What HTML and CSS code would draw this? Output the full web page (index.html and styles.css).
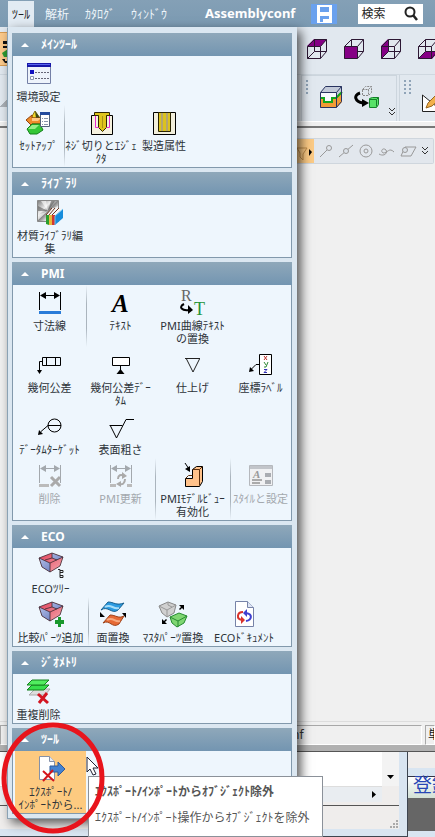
FILE: index.html
```html
<!DOCTYPE html>
<html lang="ja">
<head>
<meta charset="utf-8">
<meta name="viewport" content="width=device-width, initial-scale=1">
<title>Assemblyconf</title>
<link rel="stylesheet" href="styles.css">
</head>
<body>
<svg class="defs" aria-hidden="true">
  <defs>
    <linearGradient id="metal" x1="0" y1="0" x2="1" y2="1"><stop offset="0" stop-color="#777"/><stop offset=".35" stop-color="#eee"/><stop offset=".5" stop-color="#888"/><stop offset=".7" stop-color="#f4f4f4"/><stop offset="1" stop-color="#777"/></linearGradient>
    <linearGradient id="redface" x1="0" y1="0" x2="1" y2="1"><stop offset="0" stop-color="#e0405a"/><stop offset="1" stop-color="#f5a8ae"/></linearGradient>
    <linearGradient id="blueface" x1="0" y1="0" x2="1" y2="1"><stop offset="0" stop-color="#c3cdf0"/><stop offset="1" stop-color="#5469b4"/></linearGradient>
    <g id="bin">
      <path d="M1 6 14 1l11 4-3 9-10 6-8-5z" fill="url(#redface)"/>
      <path d="M1 6 12 11v9l-8-5zM14 1l11 4-6 3-5-2z" fill="url(#blueface)"/>
      <path d="M1 6 14 1l11 4-3 9-10 6-8-5zM1 6l11 5 13-6M12 11v9M14 1v5l-7 2M14 6l5 2" fill="none" stroke="#3c2730" stroke-width=".8"/>
    </g>
    <g id="cube"><path d="M1.500 8.500h13v12h-13zM8.500 1.500h12v12h-12zM1.500 8.500l7-7M14.500 8.500l6-7M14.500 20.500l6-7M1.500 20.500l7-7" fill="none" stroke="#2c1733"/></g>
    <g id="dim"><path d="M2.500 3v18M23.500 3v18M4 6.500h18" fill="none" stroke="currentColor"/><path d="M3 6.500l6-3.500v7zM23 6.500l-6-3.500v7z" fill="currentColor"/></g>
  </defs>
</svg>
<div class="app">
  <header class="menubar">
    <nav class="tabs">
      <button class="tab tab-active">ﾂｰﾙ</button>
      <button class="tab">解析</button>
      <button class="tab">ｶﾀﾛｸﾞ</button>
      <button class="tab">ｳｨﾝﾄﾞｳ</button>
    </nav>
    <h1 class="title">Assemblyconf</h1>
    <button class="save" aria-label="保存"><svg width="26" height="20" viewBox="0 0 26 20"><path d="M6 1h15v18H6z" fill="#fff"/><path d="M9 3h9v5H9zM9 12h9v6H9z" fill="#6aa1ee"/><path d="M12 15h6v3h-6z" fill="#fff"/></svg></button>
    <label class="search"><input type="text" placeholder="検索" aria-label="検索"><svg width="14" height="15" viewBox="0 0 14 15"><circle cx="6" cy="6" r="4.500" fill="none" stroke="#222" stroke-width="2"/><path d="m9 9 4 5" stroke="#222" stroke-width="2.500"/></svg></label>
  </header>

  <div class="toolbar views">
    <button class="sliver" aria-label="選択"><svg width="8" height="34" viewBox="0 0 8 34"><path d="M3 8h5v3H3zM3 13h5v2H3z" fill="#111"/><path d="m2 20 6-4v8H4z" fill="#2d9a32"/><path d="M2 26h3v2h3v2H5z" fill="#111"/></svg></button>
    <div class="tools tools-views">
      <button aria-label="上面"><svg width="22" height="22"><path d="M1 8 8 1h13l-6 7z" fill="#850085"/><use href="#cube"/></svg></button>
      <button aria-label="前面"><svg width="22" height="22"><use href="#cube"/><path d="M2 9h12v11H2z" fill="#850085"/></svg></button>
      <button aria-label="左面"><svg width="22" height="22"><path d="M1 8 8 1v13l-7 7z" fill="#850085"/><use href="#cube"/></svg></button>
      <button aria-label="底面"><svg width="22" height="22"><path d="M1 21 8 14h13l-6 7z" fill="#850085"/><use href="#cube"/></svg></button>
    </div>
  </div>
  <div class="toolbar parts">
    <span class="corner"></span>
    <div class="tools tools-parts">
      <span class="grip"></span>
      <button aria-label="分割"><svg width="24" height="24"><path d="M1 8 7 1h16v16l-6 6H1z" fill="#c3cad9"/><path d="M1 8h16v8H1z" fill="#f7f9fd"/><path d="M1 12h5v5h6v-5h5l6-6v11l-6 6H1z" fill="#f29b35"/><path d="M1 13h4v4h8v-4h4l6-6" fill="none" stroke="#12a51e" stroke-width="2"/><path d="m1.500 7.500 5-6h16v15l-5 6h-16zM1.500 7.500h16l5-6M17.500 7.500v15" fill="none" stroke="#28335f"/></svg></button>
      <button aria-label="部品配置"><svg width="26" height="24"><path d="m8.500 4.500 3-3h6v6l-3 3h-6zM8.500 4.500h6v6M14.500 4.500l3-3" fill="none" stroke="#888" stroke-dasharray="2 1"/><path d="M6 8C-1 10 1 17 9 18" fill="none" stroke="#000" stroke-width="3"/><path d="m8 14 7 4-7 4z"/><path d="m15.500 13.500 3-1h6v7l-2 3h-7z" fill="#58e268" stroke="#14802a"/><path d="M15.500 14.500h7v7M22.500 14.500l2-2" fill="none" stroke="#14802a"/></svg></button>
      <svg class="more" width="7" height="8"><path d="m0 0 3 3 3-3M0 4l3 3 3-3" fill="none" stroke="#333"/></svg>
    </div>
    <div class="tools tools-sketch">
      <span class="grip"></span>
      <button aria-label="スケッチ"><svg width="24" height="24"><path d="M1.500 4v16.500h20z" fill="#fff" stroke="#222"/><path d="m5 17 2-5L18 1l4 4L11 15z" fill="#f1b04b" stroke="#98651f"/></svg></button>
    </div>
  </div>

  <main class="canvas">
    <div class="snapbar">
      <button class="snap-on" aria-label="フィルタ"><svg width="17" height="24"><path d="M0 9h10l-4 6v6l-3-3v-4z" fill="none" stroke="#c18e4b"/><path d="m12 10 3 3-3 4z"/></svg></button>
      <button aria-label="端点"><svg width="14" height="14"><path d="m1 13 7-7" stroke="#999"/><circle cx="10" cy="4" r="2.500" fill="none" stroke="#999"/></svg></button>
      <button aria-label="中点"><svg width="16" height="14"><path d="M1 13 15 1" stroke="#999"/><circle cx="8" cy="7" r="2.500" fill="#dce3ea" stroke="#999"/></svg></button>
      <button aria-label="中心"><svg width="14" height="14"><circle cx="7" cy="7" r="6" fill="none" stroke="#999"/><circle cx="7" cy="7" r="2" fill="none" stroke="#999"/></svg></button>
      <button aria-label="曲線"><svg width="17" height="14"><path d="M1 10c5 3 9-1 7-4-3-3-6 1-3 3 5 0 6-6 11-1" fill="none" stroke="#999"/></svg></button>
      <button aria-label="面"><svg width="17" height="14"><path d="M1 12 5 3h11l-5 9z" fill="none" stroke="#999"/><circle cx="5" cy="6" r="2.500" fill="#dce3ea" stroke="#999"/></svg></button>
      <svg class="more" width="7" height="8"><path d="m0 0 3 3 3-3M0 4l3 3 3-3" fill="none" stroke="#333"/></svg>
    </div>
  </main>
  <footer class="statusbar"><span class="status-file">conf</span><span class="status-unit">単</span></footer>

  <div class="desktop">
    <section class="rear-window">
      <div class="rear-view">
        <div class="rear-page"></div>
        <div class="vscroll"><svg width="7" height="4"><path d="M0 0h7L3.500 4z"/></svg></div>
        <div class="hscroll"><svg width="4" height="7"><path d="M0 0v7l4-3.500z"/></svg></div>
      </div>
      <div class="rear-status"><svg width="9" height="9" fill="#aaa"><path d="M6 0h2v2H6zM3 3h2v2H3zM6 3h2v2H6zM0 6h2v2H0zM3 6h2v2H3zM6 6h2v2H6z"/></svg></div>
    </section>
    <section class="side-window">
      <div class="side-strip"></div>
      <a class="side-link" href="#">登録</a>
      <div class="side-body"></div>
    </section>
  </div>

  <div class="menu">
    <section class="group">
      <h2>ﾒｲﾝﾂｰﾙ</h2>
      <div class="row row-main">
        <button class="item"><svg class="icon" viewBox="0 0 26 26"><path d="M1.500 3.500h23v20h-23z" fill="#eef3fb" stroke="#7480a6"/><path d="M1 3h24v4H1z" fill="#1717a8"/><path d="M2 4h22v1H2z" fill="#5a66ee"/><path d="M4 10h4v4H4z" fill="#1111c0"/><path d="M4.500 16.500h3v3h-3z" fill="#fff" stroke="#8894b0"/><path d="M9 12.500h14M9 18.500h14" stroke="#667" stroke-dasharray="2 1"/></svg><span>環境設定</span></button>
      </div>
      <div class="row row-main">
        <button class="item"><svg class="icon" viewBox="0 0 26 26"><path d="m9 2 5 7H5z" fill="#f3d928" stroke="#857314"/><path d="m9 2 5 7h-4z" fill="#3d4a18"/><path d="m0 11 6-5v3h9v6H6v2z" fill="#ef8c2a" stroke="#91430d"/><path d="M6 9h9l-3 3H6z" fill="#ffc983"/><path d="m1 20 5-5h8l3 6-6 4H4z" fill="#35c736" stroke="#13801b"/><path d="m2 20 4-4h7l-4 4z" fill="#97ef88"/><path d="M14.500 3.500h9v14h-9z" fill="#fff" stroke="#53637c"/><path d="M14 3h10v3H14z" fill="#244b9d"/><path d="M16 9.500h1m1 0h4M16 12.500h1m1 0h4M16 15.500h1m1 0h4" stroke="#8895ac"/></svg><span>ｾｯﾄｱｯﾌﾟ</span></button>
        <button class="item split"><svg class="icon" viewBox="0 0 26 26"><path d="M3.500 6.500h21v19h-21z" fill="#f6f2df" stroke="#000"/><path d="M6.500 3.500h15v3h-3v12l-4 4-4-4v-12h-4z" fill="#dec51d" stroke="#302800"/><path d="M14.500 7v12" stroke="#a8931a"/><path d="M7.500 7v11.500h3M21.500 7v11.500h-3" fill="none" stroke="#e72ad0"/></svg><span>ﾈｼﾞ切りとｴｼﾞｪ<br>ｸﾀ</span></button>
        <button class="item"><svg class="icon" viewBox="0 0 26 26"><path d="M2.500 3.500h22v22h-22z" fill="#f2efdc" stroke="#000"/><path d="M7.500 3.500h12v19h-12z" fill="#dbc21e" stroke="#2b2400"/><path d="M11 4v18M16 4v18" stroke="#b3a570" stroke-width="2"/></svg><span>製造属性</span></button>
      </div>
    </section>

    <section class="group">
      <h2>ﾗｲﾌﾞﾗﾘ</h2>
      <div class="row row-library">
        <button class="item"><svg class="icon" viewBox="0 0 26 26"><path d="M.5 1.500h21v21H.5z" fill="url(#metal)" stroke="#888"/><path d="m11 12-7-10h5zM11 12l10-5v7zM11 12 1 16v5z" fill="#fff" opacity=".6"/><path d="m11 12 3-10h4zM11 12 1 7v5z" fill="#444" opacity=".5"/><path d="m9 16 6-7 11 1-8 16H9z" fill="#f7f7f7"/><path d="M9 16h3v10l-3-1z" fill="#2b9e2e"/><path d="M12 16h3v10h-3z" fill="#e9b83c"/><path d="M15 16h3v10h-3z" fill="#d5382f"/><path d="m18 17 8-7v9l-8 7z" fill="#178ddc"/><path d="m9 16 6-7M12 16l6-7M15 16l7-7" stroke="#6e3622"/><path d="m18 17 8-7M18 17v9" stroke="#75c4f2"/></svg><span>材質ﾗｲﾌﾞﾗﾘ編<br>集</span></button>
      </div>
    </section>

    <section class="group">
      <h2>PMI</h2>
      <div class="row row-pmi">
        <button class="item"><svg class="icon" viewBox="0 0 26 26"><g color="#000"><use href="#dim"/></g><path d="M2 22h22v3H2z" fill="#287bd8"/></svg><span>寸法線</span></button>
        <button class="item split"><svg class="icon" viewBox="0 0 26 26"><text x="4" y="23" class="glyph-a">A</text></svg><span>ﾃｷｽﾄ</span></button>
        <button class="item"><svg class="icon" viewBox="0 0 26 26"><text x="1" y="12" class="glyph-r">R</text><text x="14" y="26" class="glyph-t">T</text><path d="M4 15c-6 3-2 7 5 6" fill="none" stroke="#000" stroke-width="2"/><path d="m8 16 5 5-5 4z"/></svg><span>PMI曲線ﾃｷｽﾄ<br>の置換</span></button>
      </div>
      <div class="row row-pmi">
        <button class="item"><svg class="icon" viewBox="0 0 26 26"><path d="M5.500 6.500h18v8h-18zM9.500 6.500v8M18.500 6.500v8M5 10.500H2.500V21" fill="none" stroke="#000"/><path d="M0 19h5l-2.500 4z"/></svg><span>幾何公差</span></button>
        <button class="item"><svg class="icon" viewBox="0 0 26 26"><path d="M4.500 6.500h17v8h-17zM12.500 15v6" fill="#fff" stroke="#000"/><path d="m12.500 18 4 5h-8z"/></svg><span>幾何公差ﾃﾞｰ<br>ﾀﾑ</span></button>
        <button class="item"><svg class="icon" viewBox="0 0 26 26"><path d="M5 7.500h15M6.500 8l6.500 13 6.500-13" fill="none" stroke="#222"/></svg><span>仕上げ</span></button>
        <button class="item"><svg class="icon" viewBox="0 0 26 26"><path d="M11.500 3.500h12v20h-12z" fill="#fff" stroke="#000"/><path d="m16 5 3 4m0-4-3 4" stroke="#bd302c"/><path d="m16 11 2 3m2-3-2 5h-2" fill="none" stroke="#2f8a36"/><path d="M16 18.500h3l-3 3h3" fill="none" stroke="#3332b5"/><path d="M11 13.500H8l-5 5" fill="none" stroke="#000"/><path d="m1 21 1-5 4 4z"/></svg><span>座標ﾗﾍﾞﾙ</span></button>
      </div>
      <div class="row row-pmi">
        <button class="item"><svg class="icon" viewBox="0 0 26 26"><circle cx="17.500" cy="12.500" r="6.500" fill="none" stroke="#000"/><path d="M11 12.500h13M11 12.500l-7 6" stroke="#000"/><path d="m1 22 1-5 4 4z"/></svg><span>ﾃﾞｰﾀﾑﾀｰｹﾞｯﾄ</span></button>
        <button class="item"><svg class="icon" viewBox="0 0 26 26"><path d="M1.500 12.500h13M2.500 13l6 12L18 6.500h8" fill="none" stroke="#000"/></svg><span>表面粗さ</span></button>
      </div>
      <div class="row row-pmi">
        <button class="item" disabled><svg class="icon" viewBox="0 0 26 26"><use href="#dim"/><path d="M2 22h10v3H2z" fill="#bbb"/><path d="m14 15 9 9m0-9-9 9" stroke="#aaa" stroke-width="3"/></svg><span>削除</span></button>
        <button class="item" disabled><svg class="icon" viewBox="0 0 26 26"><use href="#dim"/><path d="M2 22h6v3H2zM19 22h5v3h-5z" fill="#bbb"/><path d="M10 17c0-4 3-5 6-3M17 17c0 5-3 6-6 5" fill="none" stroke="#aaa" stroke-width="2"/><path d="m14 10 5 4-5 3zM13 19v6l-5-3z" fill="#aaa"/></svg><span>PMI更新</span></button>
        <button class="item split"><svg class="icon" viewBox="0 0 26 26"><path d="M5.500 16.500h7v-9l4-3h6v15l-3 5h-14z" fill="#ffc28b" stroke="#000"/><path d="M12.500 7.500h7v16M19.500 7.500l3-3M5.500 16.500l3-3h4" fill="none" stroke="#5a2d0b"/><path d="m5 1 4 6" stroke="#000"/><path d="m10 10-5-3 5-3z"/></svg><span>PMIﾓﾃﾞﾙﾋﾞｭｰ<br>有効化</span></button>
        <button class="item split" disabled><svg class="icon" viewBox="0 0 26 26"><path d="M1.500 3.500h23v20h-23z" fill="#f0f1f3" stroke="#b5b8bd"/><path d="M2 4h22v3H2z" fill="#c2c5ca"/><path d="M17 11h6v4h-6zM17 18h6v4h-6z" fill="#a9acb1"/><path d="M4 18h10M4 21h8" stroke="#aaa" stroke-width="2"/><text x="5" y="16" class="glyph-small">A</text></svg><span>ｽﾀｲﾙと設定</span></button>
      </div>
    </section>

    <section class="group">
      <h2>ECO</h2>
      <div class="row row-eco">
        <button class="item"><svg class="icon" viewBox="0 0 26 26"><use href="#bin"/><path d="M20 17.500h2v8M22 20.500h3v-2h-3M22 25.500h3v-2h-3" fill="none" stroke="#222"/></svg><span>ECOﾂﾘｰ</span></button>
      </div>
      <div class="row row-eco">
        <button class="item"><svg class="icon" viewBox="0 0 26 26"><use href="#bin"/><path d="M20 16h3v3h3v4h-3v3h-3v-3h-3v-4h3z" fill="#19982c"/></svg><span>比較ﾊﾟｰﾂ追加</span></button>
        <button class="item split"><svg class="icon" viewBox="0 0 26 26"><path d="m1 9 7-8c6 0 8 4 16 1l-6 7C12 14 8 4 1 9z" fill="#2b9be2" stroke="#17608f"/><path d="M5 6c6-4 8 3 14 1" fill="none" stroke="#a6ddf8" stroke-width="2"/><path d="m3 22 7-8c6 0 8 4 14 1l-5 8c-7 5-9-5-16-1z" fill="#e66a35" stroke="#9b421b"/><path d="M7 19c6-4 8 3 13 1" fill="none" stroke="#f6aa80" stroke-width="2"/><path d="M0 11v5h5zM22 12h4v5z"/></svg><span>面置換</span></button>
        <button class="item"><svg class="icon icon-wide" viewBox="0 0 30 26"><path d="m1 5 9-4 8 3-2 8-7 4-5-4z" fill="#d0d0d0" stroke="#888"/><path d="m1 5 8 4 9-5M9 9v7M10 1v3l4 2" fill="none" stroke="#999"/><path d="m12 16 9-4 8 3-3 7-7 4-5-4z" fill="#7fd672" stroke="#278b32"/><path d="m12 16 8 4 9-5M20 20v6" fill="none" stroke="#278b32"/><path d="M21 4h5v5l-2-2-2 2-1-1 2-2zM9 23H4v-5l2 2 2-2 1 1-2 2z"/></svg><span>ﾏｽﾀﾊﾟｰﾂ置換</span></button>
        <button class="item"><svg class="icon" viewBox="0 0 26 26"><path d="M4.500.5h12l6 6v19h-18z" fill="#fff" stroke="#7783a8"/><path d="M16.500.5v6h6" fill="#dde5f5" stroke="#7783a8"/><path d="M12 11c-6 0-7 7-1 8" fill="none" stroke="#d9322b" stroke-width="2"/><path d="m10 15 4 4-4 4z" fill="#d9322b"/><path d="M15 20c6-1 7-7 0-8" fill="none" stroke="#4040cf" stroke-width="2"/><path d="m16 8-4 4 4 4z" fill="#4040cf"/></svg><span>ECOﾄﾞｷｭﾒﾝﾄ</span></button>
      </div>
    </section>

    <section class="group">
      <h2>ｼﾞｵﾒﾄﾘ</h2>
      <div class="row row-main">
        <button class="item"><svg class="icon" viewBox="0 0 26 26"><path d="m3 17 6-6h15l-5 6z" fill="#ddd" stroke="#aaa"/><path d="m1 12 5-5h17l-5 5z" fill="#37df4b" stroke="#15801f"/><path d="m1 7 5-5h17l-5 5z" fill="#51ed5f" stroke="#15801f"/><path d="m12 16 10 9M21 15l-8 10" stroke="#d31622" stroke-width="3"/></svg><span>重複削除</span></button>
      </div>
    </section>

    <section class="group">
      <h2>ﾂｰﾙ</h2>
      <div class="row row-tool">
        <button class="item item-hot"><svg class="icon" viewBox="0 0 26 26"><path d="M1.500 1.500h10l5 5v18h-15z" fill="#fff" stroke="#8591a8"/><path d="M11.500 1.500v5h5" fill="#e7ecf5" stroke="#8591a8"/><path d="M12 11h8V7l7 7-7 7v-4h-8z" fill="#4482d0" stroke="#2f5a9b"/><path d="m5 16 11 10M15 15 5 26" stroke="#d4151c" stroke-width="2"/></svg><span>ｴｸｽﾎﾟｰﾄ/<br>ｲﾝﾎﾟｰﾄから...</span></button>
      </div>
    </section>
  </div>

  <div class="tooltip" role="tooltip">
    <strong>ｴｸｽﾎﾟｰﾄ/ｲﾝﾎﾟｰﾄからｵﾌﾞｼﾞｪｸﾄ除外</strong>
    <span>ｴｸｽﾎﾟｰﾄ/ｲﾝﾎﾟｰﾄ操作からｵﾌﾞｼﾞｪｸﾄを除外</span>
  </div>
  <svg class="cursor" width="14" height="20" viewBox="0 0 14 20"><path d="M1 1v15l3-3 3 6 3-1-3-6h5z" fill="#fff" stroke="#223"/></svg>
  <svg class="marker" width="106" height="116" viewBox="0 0 106 116"><ellipse cx="53" cy="58" rx="49" ry="53" fill="none" stroke="#e8141c" stroke-width="5"/></svg>
</div>
</body>
</html>
```
FILE: styles.css
```css
* { box-sizing: border-box; }

body {
  margin: 0;
  font-family: "Noto Sans", "Noto Sans CJK JP", sans-serif;
  font-size: 11px;
  line-height: 13px;
  color: #333;
  background: #f0f0f0;
}

button {
  margin: 0;
  padding: 0;
  border: 0;
  background: none;
  font: inherit;
  color: inherit;
}

svg { display: block; flex: none; }
.defs { position: absolute; width: 0; height: 0; }

.app {
  --menu-left: 7px;
  --menu-width: 290px;
  --menu-edge: calc(var(--menu-left) + var(--menu-width));
  position: relative;
  display: flex;
  flex-direction: column;
  min-height: 100vh;
  overflow: hidden;
}

/* Menu bar */
.menubar {
  display: flex;
  align-items: center;
  height: 27px;
  padding-left: 8px;
  background: linear-gradient(#84a0b6, #7b9ab2);
  color: #fff;
  font-size: 12px;
}
.tabs { display: flex; align-self: stretch; padding-top: 1px; }
.tab { padding: 0 8px; color: #eef5fa; }
.tab-active { margin-right: 3px; padding: 0 4px; background: #e2ebf3; color: #222; }
.title { margin: 0 0 0 30px; font-size: 13px; font-weight: 700; }
.save { margin-left: 16px; background: #6aa1ee; }
.search {
  display: flex;
  align-items: center;
  flex: none;
  width: 65px;
  height: 20px;
  margin-left: 21px;
  padding: 0 5px 0 3px;
  background: #fff;
}
.search input {
  flex: 1;
  min-width: 0;
  padding: 0;
  border: 0;
  outline: 0;
  background: none;
  font: inherit;
}
.search input::placeholder { color: #222; opacity: 1; }

/* Toolbars */
.toolbar { display: flex; background: #e1e8ef; overflow: hidden; }
.tools { display: flex; flex: none; }
.views { height: 48px; padding-top: 5px; border-bottom: 1px solid #cfd8e0; }
.sliver { flex: none; width: 8px; height: 34px; background: #fbc98a; border: 1px solid #d99c51; border-left: 0; }
.tools-views { gap: 15px; padding: 6px 0 0 298px; }
.tools-views button { height: 22px; }
.parts { height: 47px; border-bottom: 1px solid #fff; }
.corner { flex: none; width: 8px; height: 8px; margin-top: 24px; background: linear-gradient(135deg, transparent 50%, #aab0b6 50%); }
.tools-parts {
  align-items: flex-start;
  gap: 11px;
  margin-left: 293px;
  width: 96px;
  padding: 4px 0 0 4px;
  border: 1px solid #ccd5dd;
  border-width: 1px 1px 0 1px;
}
.tools-parts button, .tools-sketch button { margin-top: 5px; }
.tools-parts .more { align-self: flex-end; margin: 0 0 5px -2px; }
.tools-sketch { gap: 10px; padding: 5px 0 0 4px; border-left: 1px solid #ccd5dd; margin-left: 2px; }
.grip {
  width: 7px;
  height: 15px;
  background: radial-gradient(circle at 1px 1px, #90a4b8 1px, transparent 1px) 0 0 / 5px 4px;
}

.canvas {
  flex: 1;
  border-top: 2px solid #777;
  margin-top: 4px;
  padding-top: 10px;
  background: #f0f0f0;
}
.snapbar {
  display: flex;
  align-items: center;
  gap: 5px;
  width: max-content;
  height: 26px;
  margin-left: var(--menu-edge);
  padding-right: 4px;
  border: 1px solid #cfd6dd;
  border-left: 0;
  border-radius: 0 2px 2px 0;
  background: #e2e7ed;
}
.snap-on { background: #fbca85; }

.statusbar {
  display: flex;
  gap: 3px;
  flex: none;
  height: 31px;
  padding-top: 3px;
  border-top: 1px solid #ddd;
  border-bottom: 1px solid #555;
  background: linear-gradient(#f0f0f0 23px, #b1b1b1 23px);
  font-size: 12px;
  line-height: 18px;
}
.statusbar span { height: 20px; border: 1px solid #a8a8a8; border-right-color: #fff; border-bottom-color: #fff; background: #f0f0f0; }
.status-file { flex: 1; padding-left: 278px; }
.status-unit { width: 10px; padding-left: 2px; color: #111; overflow: hidden; }

/* Windows behind the application */
.desktop { display: flex; flex: none; height: 85px; }
.rear-window {
  display: flex;
  flex-direction: column;
  flex: 1;
  padding-right: 8px;
  border: solid #3d4550;
  border-width: 0 1px 1px 0;
  background: #d9e5f1;
}
.rear-view {
  display: grid;
  grid-template: 34px 16px / 1fr 17px;
  height: 54px;
  background: #efedec;
  border-bottom: 1px solid #555;
}
.rear-page { background: #fff; }
.vscroll { display: grid; place-content: end center; padding-bottom: 7px; background: #f3f3f3; }
.hscroll { display: grid; place-content: center end; padding-right: 6px; background: #e9edf1; border-top: 1px solid #ddd; }
.rear-status { display: flex; align-items: flex-end; justify-content: flex-end; height: 23px; background: #efedec; }
.side-window { display: flex; flex-direction: column; width: 27px; background: #d9e5f1; overflow: hidden; }
.side-strip { height: 25px; border-bottom: 1px solid #334; background: linear-gradient(#efedec 16px, #d9e5f1 16px); }
.side-link {
  height: 21px;
  padding-left: 5px;
  background: linear-gradient(#fff, #d2e0d5);
  color: #2747b5;
  font-size: 19px;
  line-height: 17px;
  text-decoration: none;
  white-space: nowrap;
}
.side-body { height: 33px; background: #666; }

/* Drop-down tool menu */
.menu {
  position: absolute;
  top: 27px;
  left: var(--menu-left);
  display: flex;
  flex-direction: column;
  gap: 4px;
  width: var(--menu-width);
  padding: 5px 4px 4px;
  border: 1px solid #8ba2b4;
  border-top-color: #dbe7f1;
  border-right-color: #dbe7f1;
  background: #dbe7f1;
  box-shadow: 4px 4px 10px rgba(0, 0, 0, .65);
}
.group { border: solid #8299ac; border-width: 0 1px 1px; background: #eef6fd; }
.group h2 {
  display: flex;
  align-items: center;
  gap: 12px;
  height: 23px;
  margin: 0 -1px;
  padding-left: 9px;
  background: linear-gradient(#8fa8ba, #7395b1);
  color: #fff;
  font-size: 12px;
  font-weight: 700;
}
.group h2::before {
  content: "";
  border: solid transparent;
  border-width: 0 4px 4px;
  border-bottom-color: #fff;
}
.row { display: grid; }
.row-main { grid-template-columns: 51fr 74fr 52fr 101fr; }
.row-library { grid-template-columns: 74fr 204fr; }
.row-pmi { grid-template-columns: 73fr 69fr 75fr 61fr; }
.row-eco { grid-template-columns: 75fr 50fr 70fr 72fr 11fr; }
.row-tool { grid-template-columns: 71fr 205fr; padding-left: 2px; }

.item {
  display: flex;
  flex-direction: column;
  align-items: center;
  gap: 4px;
  min-width: 0;
  padding: 4px 0 2px;
  color: #2c3238;
  text-align: center;
  white-space: nowrap;
}
.item:disabled { color: #a3a8ad; }
.item-hot { background: #fdca80; }
.split { background: linear-gradient(transparent, #aab4bd 30%, #aab4bd 70%, transparent) left / 1px 100% no-repeat; }
.icon { width: 26px; height: 26px; overflow: visible; }
.icon-wide { width: 30px; }
.glyph-a { font: italic 700 25px "Liberation Serif", serif; }
.glyph-r { font: 400 16px "Liberation Serif", serif; fill: #666; }
.glyph-t { font: 400 18px "Liberation Serif", serif; fill: #259336; }
.glyph-small { font: italic 700 11px "Liberation Serif", serif; fill: #999; }

/* Overlays */
.tooltip {
  position: absolute;
  top: 776px;
  left: 88px;
  display: flex;
  flex-direction: column;
  gap: 13px;
  padding: 8px 13px 12px 6px;
  border: 1px solid #8b9199;
  background: #fff;
  color: #555;
  font-size: 12px;
  white-space: nowrap;
}
.cursor { position: absolute; top: 756px; left: 86px; }
.marker { position: absolute; top: 720px; left: 0; pointer-events: none; }
```
